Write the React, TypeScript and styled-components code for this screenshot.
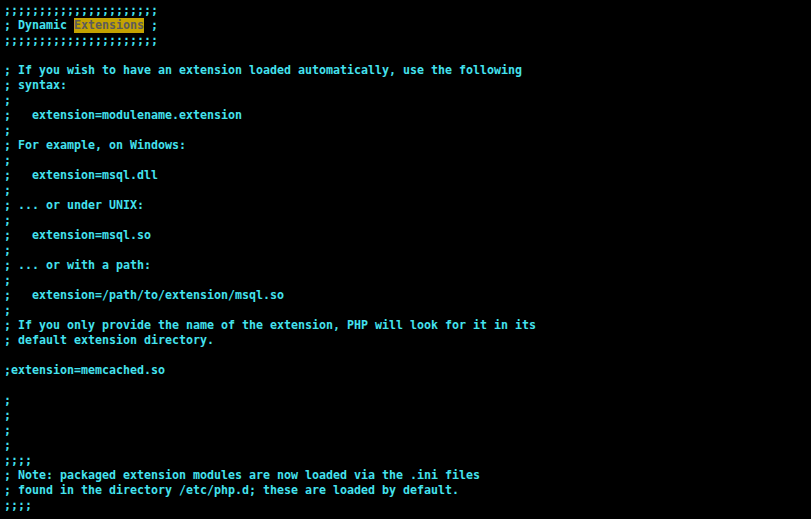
import React from "react";
import styled, { createGlobalStyle } from "styled-components";

const Global = createGlobalStyle`
  html, body { margin: 0; padding: 0; background: #000; }
  body { width: 811px; height: 519px; overflow: hidden; }
`;

const Screen = styled.div`
  display: flex;
  flex-direction: column;
  width: 811px;
  height: 519px;
  box-sizing: border-box;
  padding: 3px 0 0 4px;
  background: #000;
  color: #44e2ee;
  font-family: "DejaVu Sans Mono", "Liberation Mono", monospace;
  font-weight: bold;
  font-size: 11.63px;
`;

const Row = styled.div`
  height: 15px;
  line-height: 15px;
  white-space: pre;
`;

const Match = styled.span`
  background: #c4a300;
  color: #5c5c5c;
  display: inline-block;
  height: 15px;
`;

const lines: (string | null)[] = [
  ";;;;;;;;;;;;;;;;;;;;;;",
  null,
  ";;;;;;;;;;;;;;;;;;;;;;",
  "",
  "; If you wish to have an extension loaded automatically, use the following",
  "; syntax:",
  ";",
  ";   extension=modulename.extension",
  ";",
  "; For example, on Windows:",
  ";",
  ";   extension=msql.dll",
  ";",
  "; ... or under UNIX:",
  ";",
  ";   extension=msql.so",
  ";",
  "; ... or with a path:",
  ";",
  ";   extension=/path/to/extension/msql.so",
  ";",
  "; If you only provide the name of the extension, PHP will look for it in its",
  "; default extension directory.",
  "",
  ";extension=memcached.so",
  "",
  ";",
  ";",
  ";",
  ";",
  ";;;;",
  "; Note: packaged extension modules are now loaded via the .ini files",
  "; found in the directory /etc/php.d; these are loaded by default.",
  ";;;;",
];

export default function App() {
  return (
    <>
      <Global />
      <Screen>
        {lines.map((l, i) =>
          l === null ? (
            <Row key={i}>
              {"; Dynamic "}
              <Match>Extensions</Match>
              {" ;"}
            </Row>
          ) : (
            <Row key={i}>{l}</Row>
          )
        )}
      </Screen>
    </>
  );
}
